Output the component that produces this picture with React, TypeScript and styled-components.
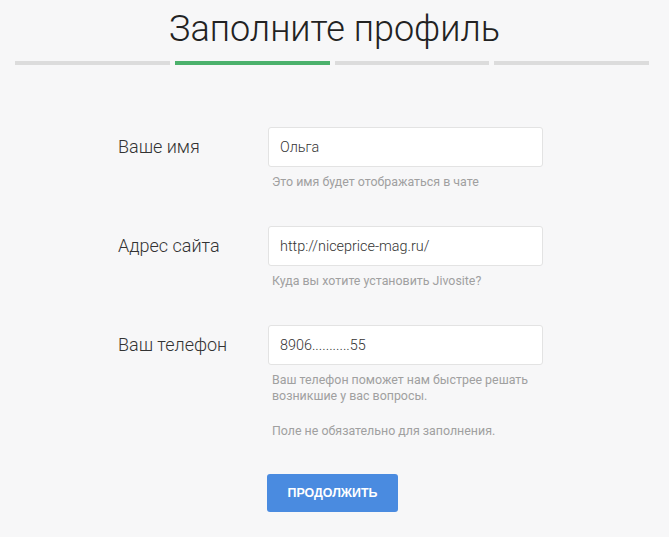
import styled, { createGlobalStyle } from "styled-components";

const GlobalStyle = createGlobalStyle`
  body {
    margin: 0;
    background: #f7f7f8;
    font-family: Roboto, "Noto Sans", sans-serif;
    color: #333;
  }
`;

const Page = styled.div`
  width: 669px;
  height: 537px;
  display: flex;
  flex-direction: column;
  align-items: center;
  padding-top: 8px;
  box-sizing: border-box;
  overflow: hidden;
`;

const Title = styled.h1`
  margin: 0;
  font-size: 36px;
  line-height: 42px;
  font-weight: 300;
  color: #222;
`;

const Steps = styled.div`
  align-self: flex-start;
  display: flex;
  gap: 5px;
  width: 634px;
  margin: 11px 0 0 15px;
`;

const Step = styled.div<{ $active?: boolean }>`
  flex: 1;
  height: 4px;
  background: ${(props) => (props.$active ? "#4cb16c" : "#dcdcdc")};
`;

const Form = styled.form`
  align-self: flex-start;
  display: flex;
  flex-direction: column;
  gap: 36px;
  margin: 62px 0 0 118px;
  width: 425px;
`;

const Row = styled.div`
  display: grid;
  grid-template-columns: 150px 275px;
  align-items: start;
`;

const Label = styled.label`
  font-size: 18px;
  font-weight: 300;
  line-height: 40px;
  color: #333;
`;

const Field = styled.div`
  display: flex;
  flex-direction: column;
`;

const Input = styled.input`
  box-sizing: border-box;
  width: 275px;
  height: 40px;
  padding: 0 11px;
  border: 1px solid #e3e3e3;
  border-radius: 3px;
  background: #fff;
  font-family: Roboto, sans-serif;
  font-size: 14.4px;
  font-weight: 300;
  color: #333;
  outline: none;
`;

const Hint = styled.p`
  margin: 7px 0 0 4px;
  font-size: 12.4px;
  line-height: 16px;
  color: #a0a0a0;

  & + & {
    margin-top: 19px;
  }
`;

const Actions = styled.div`
  margin-top: -1px;
  padding-left: 149px;
`;

const Button = styled.button`
  width: 131px;
  height: 38px;
  border: none;
  border-radius: 3px;
  background: #4a8be0;
  color: #fff;
  font-family: "Liberation Sans", Arial, sans-serif;
  font-weight: 700;
  font-size: 12.4px;
  text-transform: uppercase;
  cursor: pointer;
`;

const fields = [
  {
    label: "Ваше имя",
    value: "Ольга",
    hints: ["Это имя будет отображаться в чате"],
  },
  {
    label: "Адрес сайта",
    value: "http://niceprice-mag.ru/",
    hints: ["Куда вы хотите установить Jivosite?"],
  },
  {
    label: "Ваш телефон",
    value: "8906...........55",
    hints: [
      "Ваш телефон поможет нам быстрее решать возникшие у вас вопросы.",
      "Поле не обязательно для заполнения.",
    ],
  },
];

export default function App() {
  return (
    <>
      <GlobalStyle />
      <Page>
        <Title>Заполните профиль</Title>
        <Steps>
          <Step />
          <Step $active />
          <Step />
          <Step />
        </Steps>
        <Form onSubmit={(e) => e.preventDefault()}>
          {fields.map((f) => (
            <Row key={f.label}>
              <Label>{f.label}</Label>
              <Field>
                <Input defaultValue={f.value} />
                {f.hints.map((h) => (
                  <Hint key={h}>{h}</Hint>
                ))}
              </Field>
            </Row>
          ))}
          <Actions>
            <Button type="submit">Продолжить</Button>
          </Actions>
        </Form>
      </Page>
    </>
  );
}
